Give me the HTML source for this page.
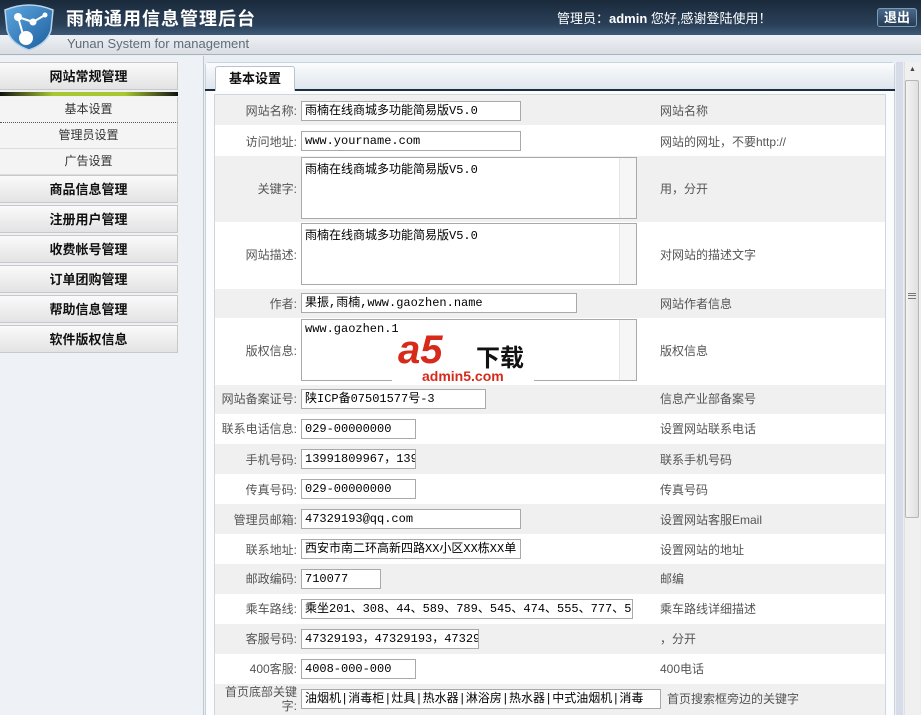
<!DOCTYPE html>
<html><head><meta charset="utf-8"><style>
*{margin:0;padding:0;box-sizing:border-box}
html,body{width:921px;height:715px;overflow:hidden}
body{background:#e9eef4;font-family:"Liberation Sans","Noto Sans CJK SC",sans-serif;font-size:12px;color:#333;position:relative}
.abs{position:absolute}
#top{left:0;top:0;width:921px;height:35px;background:linear-gradient(#1a2a3b,#2a4058 70%,#3d5a78)}
#sub{left:0;top:35px;width:921px;height:20px;background:linear-gradient(#eef1f4,#d9dee3);border-bottom:1px solid #a9b2bb}
.title{left:66px;top:5px;color:#fff;font-size:18px;font-weight:bold;letter-spacing:1px}
.en{left:67px;top:36px;color:#5f6c78;font-size:13px}
.welcome{left:557px;top:8px;color:#fff;font-size:13px}
.exit{left:877px;top:8px;width:40px;height:19px;border:1px solid #7f9ab5;border-radius:3px;background:linear-gradient(#4a6a8c,#253c55);color:#fff;font-size:13px;font-weight:bold;text-align:center;line-height:17px}
#side{left:0;top:56px;width:204px;height:659px;background:#eef2f7;border-right:1px solid #bcc7d2}
.m{position:absolute;left:0;width:178px;height:28px;background:linear-gradient(#fafafa,#e3e3e3);border:1px solid #c8c8c8;border-left:none;font-weight:bold;font-size:13px;color:#111;text-align:center;line-height:27px}
.s{position:absolute;left:0;width:178px;height:26px;background:#f4f4f4;border-right:1px solid #c8c8c8;border-bottom:1px solid #ddd;text-align:center;line-height:25px;color:#333}
#panel{left:205px;top:62px;width:690px;height:653px;background:#fafcfd;border:1px solid #c9d3dc;border-bottom:none;border-radius:4px 4px 0 0}
.tabbar{left:206px;top:63px;width:688px;height:27px;background:linear-gradient(#fbfcfd,#dde5ec)}
.tab{left:215px;top:66px;width:80px;height:25px;background:#fff;border:1px solid #b7c3cf;border-bottom:none;border-radius:3px 3px 0 0;font-weight:bold;font-size:13px;text-align:center;line-height:24px;color:#111}
.tline{left:205px;top:89px;width:690px;height:2px;background:#1d2d3d}
#tbl{left:214px;top:94px;width:672px;height:621px;border:1px solid #cfd6dc;border-bottom:none;background:#fff}
.r{position:absolute;left:215px;width:670px}
.g{background:#f0f0f0}
.lb{position:absolute;right:588px;color:#555;white-space:nowrap;text-align:right}
.in{position:absolute;left:86px;height:20px;border:1px solid #a9a9a9;background:#fff;font-family:"Liberation Mono","Noto Sans CJK SC",monospace;font-size:12px;line-height:18px;padding-left:3px;color:#000;white-space:nowrap;overflow:hidden}
.ta{position:absolute;left:86px;width:336px;height:62px;border:1px solid #a9a9a9;background:#fff;font-family:"Liberation Mono","Noto Sans CJK SC",monospace;font-size:12px;padding:2px 3px;color:#000}
.ta:after{content:"";position:absolute;right:0;top:0;width:16px;height:100%;background:#f6f6f6;border-left:1px solid #e6e6e6}
.ds{position:absolute;left:445px;color:#555;white-space:nowrap}
#sb{left:904px;top:62px;width:16px;height:653px;background:#f0f0f0;border-left:1px solid #e0e0e0}
#thumb{left:905px;top:80px;width:14px;height:438px;background:linear-gradient(90deg,#f3f3f3,#e0e0e0);border:1px solid #b5b5b5;border-radius:2px}
</style></head><body>
<div id="top" class="abs"></div>
<div id="sub" class="abs"></div>
<svg class="abs" style="left:2px;top:2px" width="54" height="50" viewBox="0 0 54 50">
<defs><linearGradient id="sg" x1="0" y1="0" x2="1" y2="1"><stop offset="0" stop-color="#5fa8e0"/><stop offset="1" stop-color="#1b5c9c"/></linearGradient></defs>
<path d="M3 8 Q27 -2 51 8 L49 28 Q45 42 27 48 Q9 42 5 28 Z" fill="url(#sg)" stroke="#b8d4ec" stroke-width="1.5"/>
<path d="M16 15 L31 20 L43 13 M16 15 L22 36" stroke="#fff" stroke-width="2" fill="none"/>
<circle cx="16" cy="15" r="4" fill="#fff"/><circle cx="31" cy="20" r="3.5" fill="#fff"/><circle cx="43" cy="13" r="2.5" fill="#fff"/><circle cx="24" cy="36" r="7" fill="#fff"/>
</svg>
<div class="abs title">雨楠通用信息管理后台</div>
<div class="abs en">Yunan System for management</div>
<div class="abs welcome">管理员：<b>admin</b> 您好,感谢登陆使用！</div>
<div class="abs exit">退出</div>

<div id="side" class="abs"></div>
<div class="m" style="top:62px">网站常规管理</div>
<div class="abs" style="left:0;top:92px;width:178px;height:4px;background:linear-gradient(90deg,#111,#a8c832 30%,#a8c832 70%,#111)"></div>
<div class="s" style="top:97px;border-bottom:1px dotted #555">基本设置</div>
<div class="s" style="top:123px">管理员设置</div>
<div class="s" style="top:149px">广告设置</div>
<div class="m" style="top:175px">商品信息管理</div>
<div class="m" style="top:205px">注册用户管理</div>
<div class="m" style="top:235px">收费帐号管理</div>
<div class="m" style="top:265px">订单团购管理</div>
<div class="m" style="top:295px">帮助信息管理</div>
<div class="m" style="top:325px">软件版权信息</div>

<div id="panel" class="abs"></div>
<div class="abs tabbar"></div>
<div class="abs tline"></div>
<div class="abs tab">基本设置</div>
<div id="tbl" class="abs"></div>

<div class="r g" style="top:95px;height:30px"><span class="lb" style="top:7px">网站名称:</span><div class="in" style="top:6px;width:220px">雨楠在线商城多功能简易版V5.0</div><span class="ds" style="top:7px">网站名称</span></div>
<div class="r" style="top:125px;height:31px"><span class="lb" style="top:8px">访问地址:</span><div class="in" style="top:6px;width:220px">www.yourname.com</div><span class="ds" style="top:8px">网站的网址，不要http://</span></div>
<div class="r g" style="top:156px;height:66px"><span class="lb" style="top:24px">关键字:</span><div class="ta" style="top:1px">雨楠在线商城多功能简易版V5.0</div><span class="ds" style="top:24px">用，分开</span></div>
<div class="r" style="top:222px;height:67px"><span class="lb" style="top:24px">网站描述:</span><div class="ta" style="top:1px">雨楠在线商城多功能简易版V5.0</div><span class="ds" style="top:24px">对网站的描述文字</span></div>
<div class="r g" style="top:289px;height:29px"><span class="lb" style="top:6px">作者:</span><div class="in" style="top:4px;width:276px">果振,雨楠,www.gaozhen.name</div><span class="ds" style="top:6px">网站作者信息</span></div>
<div class="r" style="top:318px;height:67px"><span class="lb" style="top:24px">版权信息:</span><div class="ta" style="top:1px">www.gaozhen.1</div><span class="ds" style="top:24px">版权信息</span></div>
<div class="abs" style="left:392px;top:333px;width:142px;height:54px;background:#fff"></div>
<div class="abs" style="left:398px;top:330px;font-size:40px;font-weight:bold;font-style:italic;color:#d62a1a;line-height:40px">a5</div>
<div class="abs" style="left:476px;top:338px;font-size:24px;font-weight:bold;color:#111">下载</div>
<div class="abs" style="left:422px;top:368px;font-size:14px;font-weight:bold;color:#d62a1a">admin5.com</div>
<div class="r g" style="top:385px;height:29px"><span class="lb" style="top:5px">网站备案证号:</span><div class="in" style="top:4px;width:185px">陕ICP备07501577号-3</div><span class="ds" style="top:5px">信息产业部备案号</span></div>
<div class="r" style="top:414px;height:30px"><span class="lb" style="top:6px">联系电话信息:</span><div class="in" style="top:5px;width:115px">029-00000000</div><span class="ds" style="top:6px">设置网站联系电话</span></div>
<div class="r g" style="top:444px;height:30px"><span class="lb" style="top:7px">手机号码:</span><div class="in" style="top:5px;width:115px">13991809967，139</div><span class="ds" style="top:7px">联系手机号码</span></div>
<div class="r" style="top:474px;height:30px"><span class="lb" style="top:7px">传真号码:</span><div class="in" style="top:5px;width:115px">029-00000000</div><span class="ds" style="top:7px">传真号码</span></div>
<div class="r g" style="top:504px;height:30px"><span class="lb" style="top:7px">管理员邮箱:</span><div class="in" style="top:5px;width:220px">47329193@qq.com</div><span class="ds" style="top:7px">设置网站客服Email</span></div>
<div class="r" style="top:534px;height:30px"><span class="lb" style="top:7px">联系地址:</span><div class="in" style="top:5px;width:220px">西安市南二环高新四路XX小区XX栋XX单</div><span class="ds" style="top:7px">设置网站的地址</span></div>
<div class="r g" style="top:564px;height:30px"><span class="lb" style="top:6px">邮政编码:</span><div class="in" style="top:5px;width:80px">710077</div><span class="ds" style="top:6px">邮编</span></div>
<div class="r" style="top:594px;height:30px"><span class="lb" style="top:6px">乘车路线:</span><div class="in" style="top:5px;width:332px">乘坐201、308、44、589、789、545、474、555、777、5</div><span class="ds" style="top:6px">乘车路线详细描述</span></div>
<div class="r g" style="top:624px;height:30px"><span class="lb" style="top:6px">客服号码:</span><div class="in" style="top:5px;width:178px">47329193，47329193，47329</div><span class="ds" style="top:6px">，分开</span></div>
<div class="r" style="top:654px;height:30px"><span class="lb" style="top:6px">400客服:</span><div class="in" style="top:5px;width:115px">4008-000-000</div><span class="ds" style="top:6px">400电话</span></div>
<div class="r g" style="top:684px;height:31px"><span class="lb" style="top:1px;line-height:14px;width:84px;white-space:normal;right:588px">首页底部关键字:</span><div class="in" style="top:5px;width:360px">油烟机|消毒柜|灶具|热水器|淋浴房|热水器|中式油烟机|消毒</div><span class="ds" style="top:6px;left:452px">首页搜索框旁边的关键字</span></div>

<div class="abs" style="left:896px;top:62px;width:7px;height:653px;background:#d6dde8"></div>
<div id="sb" class="abs"></div>
<div class="abs" style="left:909px;top:66px;font-size:7px;color:#444">▲</div>
<div id="thumb" class="abs"></div>
<div class="abs" style="left:908px;top:293px;width:8px;height:6px;border-top:1px solid #777;border-bottom:1px solid #777"><div style="margin-top:1px;border-top:1px solid #777"></div></div>
</body></html>
